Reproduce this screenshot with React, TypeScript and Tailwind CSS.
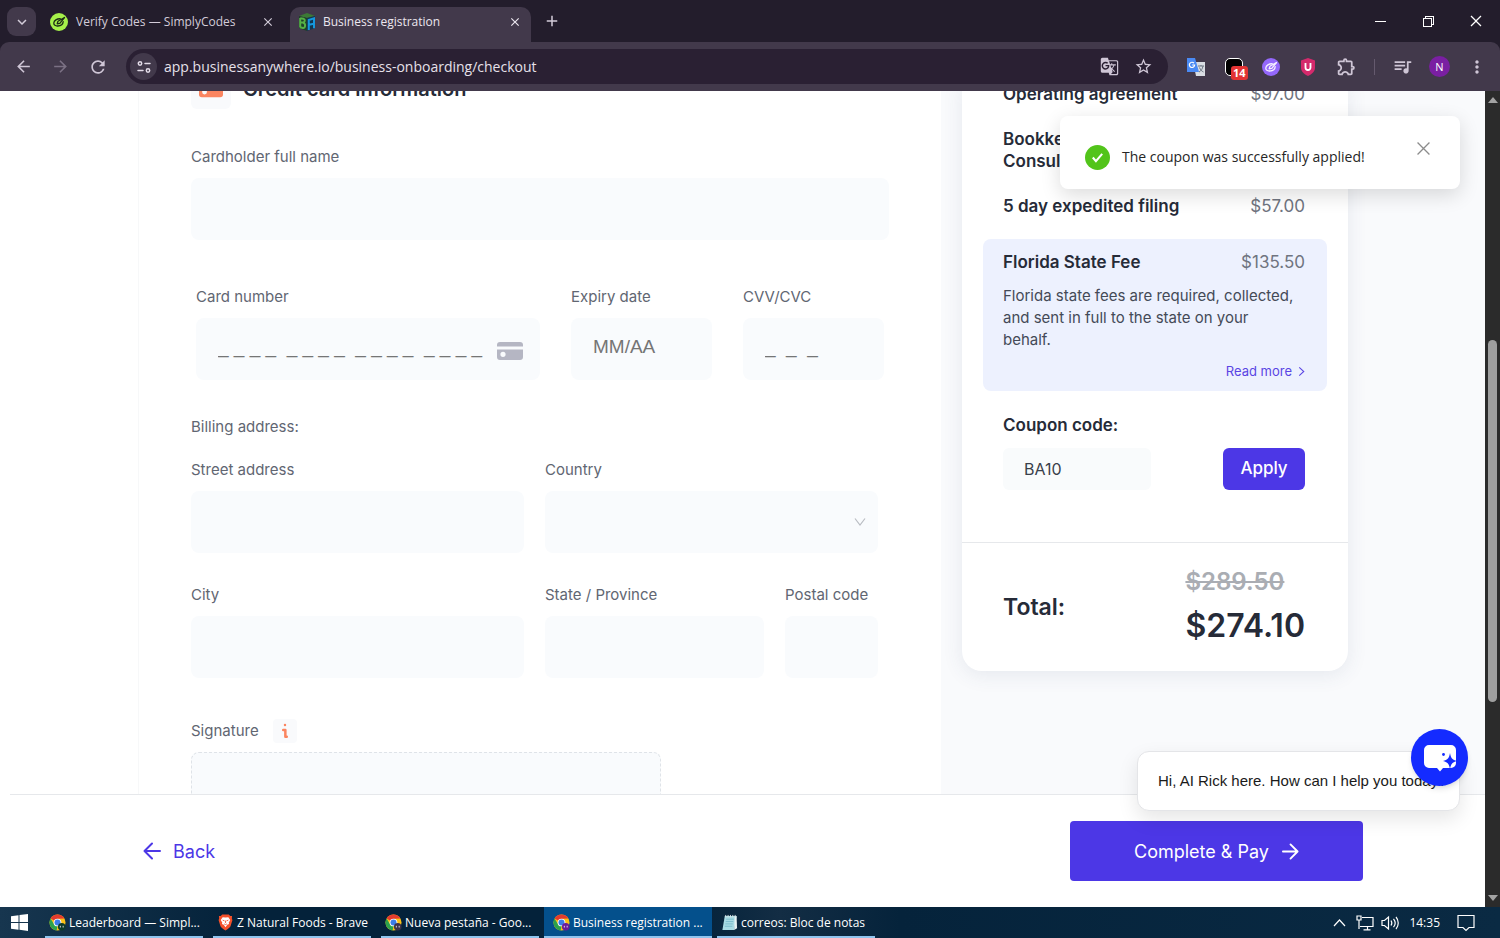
import { useId, type ReactNode } from 'react';
import {
  MdAdd,
  MdArrowBack,
  MdArrowForward,
  MdClose,
  MdGTranslate,
  MdKeyboardArrowDown,
  MdMoreVert,
  MdOutlineExtension,
  MdQueueMusic,
  MdRefresh,
  MdStarBorder,
} from 'react-icons/md';
import { VscChromeClose, VscChromeMinimize, VscChromeRestore } from 'react-icons/vsc';

const fieldClass = 'w-full rounded-lg bg-[#f9fbfd] px-[22px] pb-[4px] text-[#2a2d3a] outline-none';
const labelClass = 'block mb-[10px] text-[15px] leading-[22px] text-[#616672]';

/* ---------- icons ---------- */

function ScribbleIcon({ className, fill, stroke }: { className: string; fill: string; stroke: string }) {
  return (
    <svg viewBox="0 0 18 18" className={className} aria-hidden="true">
      <circle cx="9" cy="9" r="9" fill={fill} />
      <g fill="none" stroke={stroke} strokeWidth="1.300" strokeLinecap="round" strokeLinejoin="round">
        <path d="M14.500 4.500 8 8.200l-.8 2.600 2.600-.4Z" />
        <path d="M10.500 5.800C7 5.500 4 7.500 3.800 10c-.1 2 1.700 3.200 4 3 2.800-.2 5.200-2 5.400-4.400" />
      </g>
    </svg>
  );
}

function CubeLogo() {
  return (
    <svg viewBox="0 0 18 18" className="size-[18px]" aria-hidden="true">
      <path d="M1 3 9 0l8 3-8 2Z" fill="#3c7a35" />
      <path d="M1 3l8 2v13l-8-3Z" fill="#1d3f2a" />
      <path d="M17 3 9 5v13l8-3Z" fill="#123650" />
      <path d="M2.200 5v9.500M2.200 5.200l3.300.6c2 .6 1.500 3.600-.5 3.700H2.200M5 9.700c2.800.4 2.800 5.500-.1 5.200l-2.700-.6" fill="none" stroke="#55b146" strokeWidth="2" />
      <path d="M10.800 17V7l5.200-1.700v10M11 11.800l4.800-1" fill="none" stroke="#1597dd" strokeWidth="2" />
    </svg>
  );
}

function ChromeLogo({ badge }: { badge: string }) {
  return (
    <svg viewBox="0 0 18 18" className="size-[17px] shrink-0" aria-hidden="true">
      <circle cx="9" cy="9" r="8.500" fill="#fbc116" />
      <path d="M9 9 1.640 4.750A8.500 8.500 0 0 1 16.360 4.750L9 5Z" fill="#e33b2e" />
      <path d="M1.640 4.750 5.500 11 9 13l-1 4.450A8.500 8.500 0 0 1 1.640 4.750Z" fill="#2ba24c" />
      <circle cx="9" cy="9" r="4.100" fill="#fff" />
      <circle cx="9" cy="9" r="3.200" fill="#3b7de8" />
      <circle cx="13.500" cy="13.500" r="4" fill={badge} />
      <path d="M12 12.500v1.800M15 12.500v1.800" stroke="#e6dff0" strokeWidth="1" />
    </svg>
  );
}

function BraveLogo() {
  return (
    <svg viewBox="0 0 18 18" className="size-[17px] shrink-0" aria-hidden="true">
      <path d="M5.500.5h7l1.500 1.500 2 .2-.3 2.300.6 2-2 6.500c-.3 1-2.200 2.400-5.300 4.500-3.100-2.100-5-3.500-5.300-4.500l-2-6.500.6-2L2 2.200 4 2Z" fill="#f4502a" />
      <path d="M9 3.800 12 3.400l2 3-1.600 2.800.4 1.300-2 1L9 14l-1.800-2.500-2-1 .4-1.300L4 6.400l2-3Z" fill="#fff" />
      <path d="M6 6.500l2 .8M12 6.500l-2 .8M9 7v2.500M7.500 10.500 9 11.200l1.500-.7" stroke="#f4502a" strokeWidth=".9" fill="none" />
    </svg>
  );
}

function NotepadLogo() {
  return (
    <svg viewBox="0 0 18 18" className="size-[17px] shrink-0" aria-hidden="true">
      <path d="M4 2h12.500L14 17H1.500Z" fill="#a9dbe4" />
      <path d="M14.500 3 16.500 2l.5 13-3 2Z" fill="#e8f2f3" />
      <path d="M5.500 5.500h8M5 8h8M4.500 10.500h8M4 13h8" stroke="#6fb4c4" strokeWidth=".8" />
      <path d="M5 1v2.500M7.500 1v2.500M10 1v2.500M12.500 1v2.500M15 1v2.500" stroke="#dfe7e9" strokeWidth="1" />
    </svg>
  );
}

function CardIcon({ className }: { className: string }) {
  return (
    <svg viewBox="0 0 26 18" className={className} fill="currentColor" aria-hidden="true">
      <path d="M3 0h20a3 3 0 0 1 3 3v1.500H0V3a3 3 0 0 1 3-3Z" />
      <path fillRule="evenodd" d="M0 7.500h26V15a3 3 0 0 1-3 3H3a3 3 0 0 1-3-3Zm6 2.200a2.600 2.600 0 1 0 0 5.200 2.600 2.600 0 0 0 0-5.200Z" />
    </svg>
  );
}

function Arrow({ left, className }: { left?: boolean; className: string }) {
  return (
    <svg viewBox="0 0 18 18" className={className} fill="none" stroke="currentColor" strokeWidth="2" strokeLinecap="round" strokeLinejoin="round" aria-hidden="true">
      <path d={left ? 'M17 9H1.500M9 1.500 1.500 9 9 16.500' : 'M1 9h15.500M9 1.500 16.500 9 9 16.500'} />
    </svg>
  );
}

/* ---------- browser ---------- */

function TabStrip() {
  return (
    <div className="flex h-[42px] shrink-0 items-end bg-[#231d2c] text-[#d3ccd9]">
      <button aria-label="Search tabs" className="mb-[6px] ml-[7px] flex h-[29px] w-[29px] items-center justify-center rounded-[9px] bg-[#42394b]">
        <MdKeyboardArrowDown className="size-[18px]" />
      </button>
      <div className="flex h-[35px] w-[254px] items-center pb-[6px] pl-[14px] pr-[15px]">
        <ScribbleIcon className="size-[18px]" fill="#a5f04a" stroke="#1c2b16" />
        <span className="ml-[8px] flex-1 whitespace-nowrap text-[12px]">Verify Codes — SimplyCodes</span>
        <button aria-label="Close tab">
          <MdClose className="size-[14px]" />
        </button>
      </div>
      <div className="flex h-[35px] w-[241px] items-center rounded-t-[10px] bg-[#42394b] pb-[6px] pl-[8px] pr-[9px] text-[#ece7ef]">
        <CubeLogo />
        <span className="ml-[7px] flex-1 whitespace-nowrap text-[12px]">Business registration</span>
        <button aria-label="Close tab">
          <MdClose className="size-[14px]" />
        </button>
      </div>
      <button aria-label="New tab" className="mb-[12px] ml-[12px]">
        <MdAdd className="size-[18px]" />
      </button>
      <div className="mb-[13px] ml-auto mr-[16px] flex gap-[32px] text-white">
        <button aria-label="Minimize">
          <VscChromeMinimize className="size-[16px]" />
        </button>
        <button aria-label="Restore">
          <VscChromeRestore className="size-[16px]" />
        </button>
        <button aria-label="Close">
          <VscChromeClose className="size-[16px]" />
        </button>
      </div>
    </div>
  );
}

function Toolbar() {
  return (
    <div className="bg-[#231d2c]">
      <div className="flex h-[49px] shrink-0 items-center rounded-t-[9px] bg-[#42394b] text-[#cfc6d6]">
        <button aria-label="Back" className="ml-[14px]">
          <MdArrowBack className="size-[19px]" />
        </button>
        <button aria-label="Forward" className="ml-[18px] text-[#7b7184]">
          <MdArrowForward className="size-[19px]" />
        </button>
        <button aria-label="Reload" className="ml-[18px]">
          <MdRefresh className="size-[20px]" />
        </button>
        <div className="ml-[18px] flex h-[35px] flex-1 items-center rounded-full bg-[#2a2033] pl-[4px] pr-[15px]">
          <button aria-label="View site information" className="flex size-[27px] items-center justify-center rounded-full bg-[#42394b]">
            <svg viewBox="0 0 14 14" className="size-[14px]" fill="none" stroke="#e3dce8" strokeWidth="1.500" strokeLinecap="round">
              <circle cx="3" cy="3.500" r="1.700" />
              <path d="M8 3.500h5M1 10.500h5" />
              <circle cx="11" cy="10.500" r="1.700" />
            </svg>
          </button>
          <input
            aria-label="Address"
            defaultValue="app.businessanywhere.io/business-onboarding/checkout"
            className="ml-[7px] min-w-0 flex-1 bg-transparent text-[14px] text-[#e6e0ea] outline-none"
          />
          <button aria-label="Translate this page">
            <MdGTranslate className="size-[19px]" />
          </button>
          <button aria-label="Bookmark this tab" className="ml-[15px]">
            <MdStarBorder className="size-[19px]" />
          </button>
        </div>
        <button aria-label="Google Translate" className="ml-[19px]">
          <svg viewBox="0 0 18 18" className="size-[18px]">
            <path d="M6 4h12v14H9Z" fill="#d9dde3" />
            <path d="M11 8h6M14 7v1M12 14c2-1 3.500-3 4-6M12.500 9.500c1 2.500 2 3.500 4 4.500" stroke="#6d7783" fill="none" />
            <path d="M0 0h8l4 14H0Z" fill="#4a8af4" />
            <path d="M7 5.200A2.600 2.600 0 1 0 7.600 7H5.200" fill="none" stroke="#fff" strokeWidth="1.200" />
          </svg>
        </button>
        <button aria-label="Coupon extension" className="relative ml-[20px] size-[18px]">
          <span className="block size-[18px] rounded-[5px] border border-white bg-black" />
          <span className="absolute left-[6px] top-[8px] rounded-[3px] bg-[#e33434] px-[2px] text-[11px] font-bold leading-[14px] text-white">14</span>
        </button>
        <button aria-label="SimplyCodes" className="ml-[19px]">
          <ScribbleIcon className="size-[18px]" fill="#9468fb" stroke="#f5efff" />
        </button>
        <button aria-label="Shield extension" className="ml-[20px]">
          <svg viewBox="0 0 16 18" className="h-[18px] w-[16px]">
            <path d="M8 0l7 2.500v7c0 4-3 6.500-7 8.500-4-2-7-4.500-7-8.500v-7Z" fill="#d42a6c" />
            <path d="M5.500 5v4.500a2.500 2.500 0 0 0 5 0V5" fill="none" stroke="#fff" strokeWidth="1.800" />
          </svg>
        </button>
        <button aria-label="Extensions" className="ml-[20px]">
          <MdOutlineExtension className="size-[21px]" />
        </button>
        <span className="ml-[17px] h-[16px] w-px bg-[#655a6e]" />
        <button aria-label="Media controls" className="ml-[17px]">
          <MdQueueMusic className="size-[21px]" />
        </button>
        <button aria-label="Profile" className="ml-[16px] size-[21px] rounded-full bg-[#7a1fa2] text-[11px] leading-[21px] text-white">
          N
        </button>
        <button aria-label="Menu" className="ml-[17px] mr-[13px]">
          <MdMoreVert className="size-[20px]" />
        </button>
      </div>
    </div>
  );
}

function Scrollbar() {
  return (
    <div className="flex w-[15px] shrink-0 flex-col items-center bg-[#2b2b2b] py-[6px]">
      <span className="h-0 w-0 border-x-[5px] border-b-[6px] border-x-transparent border-b-[#a3a3a3]" />
      <span className="mt-[237px] h-[362px] w-[9px] rounded-full bg-[#9f9f9f]" />
      <span className="mt-auto h-0 w-0 border-x-[5px] border-t-[6px] border-x-transparent border-t-[#a3a3a3]" />
    </div>
  );
}

/* ---------- checkout form ---------- */

interface FieldProps {
  label: string;
  placeholder?: string;
  className?: string;
  icon?: ReactNode;
}

function Field({ label, placeholder, className = '', icon }: FieldProps) {
  const id = useId();
  return (
    <div className={className}>
      <label htmlFor={id} className={labelClass}>{label}</label>
      <div className="relative">
        <input id={id} placeholder={placeholder} className={`${fieldClass} block h-[62px] font-['Liberation_Sans',sans-serif] text-[19px] placeholder:text-[#757575]`} />
        {icon}
      </div>
    </div>
  );
}

function CardForm() {
  const countryId = useId();
  return (
    <form className="-mt-[22px] min-w-0 flex-1 bg-white pl-[138px]">
      <div className="h-full border-l border-[#f7f8f9] pl-[52px] pr-[52px]">
        <div className="mb-[37px] flex h-[40px] items-center gap-[12px]">
          <span className="flex size-[40px] items-center justify-center rounded-md bg-[#f9fafc]">
            <CardIcon className="h-[18px] w-[24px] text-[#fb8560]" />
          </span>
          <h2 className="text-[20px] font-semibold leading-[40px] text-[#262b38]">Credit card information</h2>
        </div>
        <Field label="Cardholder full name" />
        <div className="mt-[46px] flex gap-[31px] px-[5px]">
          <Field
            className="min-w-0 flex-1"
            label="Card number"
            placeholder="_ _ _ _  _ _ _ _  _ _ _ _  _ _ _ _"
            icon={<CardIcon className="absolute right-[17px] top-[24px] h-[18px] w-[26px] text-[#b5b6c3]" />}
          />
          <Field className="w-[141px]" label="Expiry date" placeholder="MM/AA" />
          <Field className="w-[141px]" label="CVV/CVC" placeholder="_  _  _" />
        </div>
        <p className="mb-[21px] mt-[36px] text-[15px] leading-[22px] text-[#616672]">Billing address:</p>
        <div className="grid grid-cols-2 gap-x-[21px] gap-y-[31px] pr-[11px]">
          <Field label="Street address" />
          <div>
            <label htmlFor={countryId} className={labelClass}>Country</label>
            <div className="relative">
              <select id={countryId} className={`${fieldClass} block h-[62px] appearance-none`} />
              <svg viewBox="0 0 12 8" className="pointer-events-none absolute right-[12px] top-[27px] h-[8px] w-[12px]" fill="none" stroke="#b9bcc2" strokeWidth="1.200">
                <path d="M1 .5 6 7l5-6.500" />
              </svg>
            </div>
          </div>
          <Field label="City" />
          <div className="flex gap-[21px]">
            <Field className="min-w-0 flex-1" label="State / Province" />
            <Field className="w-[93px] whitespace-nowrap" label="Postal code" />
          </div>
        </div>
        <div className="mt-[42px] flex h-[22px] items-center gap-[14px] text-[15px] text-[#616672]">
          <span>Signature</span>
          <button type="button" aria-label="About the signature" className="flex size-[24px] items-center justify-center rounded bg-[#f9fafc]">
            <svg viewBox="0 0 8 18" className="h-[16px] w-[8px]" fill="none" stroke="#fb8560" strokeWidth="2.800" strokeLinecap="round" strokeLinejoin="round">
              <path d="M4 2.200v.1M2 8h2.400v7.500H6" />
            </svg>
          </button>
        </div>
        <div className="mt-[10px] h-[160px] w-[470px] rounded-lg border border-dashed border-[#dfe3e8] bg-[#f9fbfd]" />
      </div>
    </form>
  );
}

/* ---------- order summary ---------- */

function SummaryRow({ name, price }: { name: ReactNode; price: string }) {
  return (
    <div className="flex justify-between leading-[22px]">
      <span className="text-[17px] font-semibold text-[#262b38]">{name}</span>
      <span className="text-[17px] text-[#6f7480]">{price}</span>
    </div>
  );
}

function OrderSummary() {
  const couponId = useId();
  return (
    <aside className="w-[544px] shrink-0 bg-[#f9fafc] pl-[21px]">
      <div className="-mt-[8px] w-[386px] rounded-b-[20px] bg-white shadow-[0_4px_20px_rgba(60,80,120,0.1)]">
        <div className="px-[21px]">
          <div className="flex flex-col gap-[23px] pl-[20px] pr-[22px]">
            <SummaryRow name="Operating agreement" price="$97.00" />
            <SummaryRow name={<>Bookkeeping<br />Consultation</>} price="$0.00" />
            <SummaryRow name="5 day expedited filing" price="$57.00" />
          </div>
          <div className="mt-[22px] rounded-lg bg-[#edf1fe] pb-[9px] pl-[20px] pr-[22px] pt-[12px]">
            <SummaryRow name="Florida State Fee" price="$135.50" />
            <p className="mt-[12px] pr-[8px] text-[15px] leading-[22px] text-[#444a57]">
              Florida state fees are required, collected, and sent in full to the state on your behalf.
            </p>
            <a href="#fees" className="mt-[9px] flex items-center justify-end gap-[6px] text-[13px] leading-[22px] text-[#5a45e4]">
              Read more
              <svg viewBox="0 0 6 10" className="h-[9px] w-[7px]" fill="none" stroke="currentColor" strokeWidth="1.200">
                <path d="m.5.5 5 4.500-5 4.500" />
              </svg>
            </a>
          </div>
          <div className="pb-[52px] pl-[20px] pr-[22px] pt-[23px]">
            <label htmlFor={couponId} className="block text-[17px] font-semibold leading-[22px] text-[#262b38]">Coupon code:</label>
            <div className="mt-[12px] flex justify-between">
              <input id={couponId} defaultValue="BA10" className="h-[42px] w-[148px] rounded-md bg-[#f9fbfc] px-[21px] text-[16px] text-[#3a3f4b] outline-none" />
              <button className="h-[42px] w-[82px] rounded-md bg-[#4c37e6] text-[17px] font-medium text-white">Apply</button>
            </div>
          </div>
        </div>
        <div className="flex items-center justify-between border-t border-[#e6e8eb] pb-[23px] pl-[41px] pr-[43px] pt-[23px]">
          <span className="text-[23px] font-semibold text-[#262b38]">Total:</span>
          <div className="flex flex-col gap-[6px]">
            <s className="text-[24px] font-semibold leading-[32px] text-[#aaadb3]">$289.50</s>
            <span className="text-[32px] font-semibold leading-[44px] text-[#262b38]">$274.10</span>
          </div>
        </div>
      </div>
    </aside>
  );
}

function CouponToast() {
  return (
    <div role="status" className="absolute right-[25px] top-[25px] flex h-[73px] w-[400px] items-start rounded-lg bg-white pl-[25px] pr-[30px] shadow-[0_6px_20px_rgba(0,0,0,0.14)]">
      <svg viewBox="0 0 24 24" className="mt-[29px] size-[25px]">
        <circle cx="12" cy="12" r="12" fill="#52c41a" />
        <path d="m7.500 12 3 3.500L16.500 8.500" fill="none" stroke="#fff" strokeWidth="2" />
      </svg>
      <p className="ml-[12px] mt-[30px] flex-1 font-['Open_Sans',sans-serif] text-[14px] leading-[22px] text-[#262626]">The coupon was successfully applied!</p>
      <button aria-label="Close" className="mt-[26px]">
        <svg viewBox="0 0 12 12" className="size-[13px]" stroke="#8c8c8c" strokeWidth="1.200">
          <path d="m.5.5 11 11M11.500.5l-11 11" />
        </svg>
      </button>
    </div>
  );
}

function ChatWidget() {
  return (
    <div className="absolute bottom-[96px] right-[25px] font-['Liberation_Sans',sans-serif]">
      <p className="h-[60px] w-[323px] whitespace-nowrap rounded-xl border border-[#e4e5e8] bg-white px-[20px] text-[15px] leading-[58px] text-[#1a1a1a] shadow-[0_8px_20px_rgba(0,0,0,0.1)]">
        Hi, AI Rick here. How can I help you today?
      </p>
      <button aria-label="Open chat" className="absolute -right-[8px] -top-[22px] flex size-[57px] items-center justify-center rounded-full bg-[#142bff] shadow-md">
        <svg viewBox="0 0 34 28" className="h-[28px] w-[34px]">
          <path d="M6 1h22a5 5 0 0 1 5 5v13a5 5 0 0 1-5 5h-8l-3 3.500L14 24H6a5 5 0 0 1-5-5V6a5 5 0 0 1 5-5Z" fill="#fff" />
          <path d="M27 9c.9 5 2.200 6.700 7 8-4.800 1.300-6.100 3-7 8-.9-5-2.200-6.700-7-8 4.800-1.300 6.100-3 7-8Z" fill="#142bff" />
          <circle cx="20.500" cy="10.500" r="1.400" fill="#142bff" />
        </svg>
      </button>
    </div>
  );
}

function CheckoutFooter() {
  return (
    <footer className="ml-[10px] flex h-[113px] shrink-0 items-center justify-between border-t border-[#e6e8eb] bg-white pl-[133px] pr-[122px]">
      <button className="flex items-center gap-[12px] text-[18px] text-[#4c37e6]">
        <Arrow left className="size-[18px]" />
        Back
      </button>
      <button className="flex h-[60px] w-[293px] items-center justify-center gap-[13px] rounded-sm bg-[#4c37e6] text-[18px] text-white">
        Complete &amp; Pay
        <Arrow className="size-[17px]" />
      </button>
    </footer>
  );
}

/* ---------- taskbar ---------- */

const windows = [
  { title: 'Leaderboard — Simpl...', icon: <ChromeLogo badge="#0d3b2a" /> },
  { title: 'Z Natural Foods - Brave', icon: <BraveLogo /> },
  { title: 'Nueva pestaña - Goo...', icon: <ChromeLogo badge="#3c3148" /> },
  { title: 'Business registration ...', icon: <ChromeLogo badge="#6a1b9a" />, active: true },
  { title: 'correos: Bloc de notas', icon: <NotepadLogo /> },
];

function Taskbar() {
  return (
    <div className="flex h-[31px] shrink-0 bg-[linear-gradient(90deg,#17364f,#04223a_16%,#04223a_46%,#132d44_52%,#05233b_60%,#0a2a43)] text-white">
      <button aria-label="Start" className="flex w-[40px] items-center pl-[11px]">
        <svg viewBox="0 0 17 17" className="size-[17px]" fill="#fff">
          <path d="M0 2.300 7.500 1.300V8H0ZM8.500 1.100 17 0v8H8.500ZM0 9h7.500v6.700L0 14.700ZM8.500 9H17v8l-8.500-1.200Z" />
        </svg>
      </button>
      {windows.map(w => (
        <button
          key={w.title}
          className={`flex items-center gap-[3px] border-b-2 border-[#8fc4ee] pt-[2px] whitespace-nowrap text-[12px] ${
            w.active ? 'w-[168px] bg-[#04508c] pl-[9px]' : 'mx-[5px] w-[158px] pl-[4px]'
          }`}
        >
          {w.icon}
          {w.title}
        </button>
      ))}
      <div className="ml-auto flex items-center pr-[25px]">
        <svg viewBox="0 0 12 8" className="h-[8px] w-[13px]" fill="none" stroke="#fff" strokeWidth="1.200">
          <path d="M.5 7 6 1l5.500 6" />
        </svg>
        <svg viewBox="0 0 18 16" className="ml-[10px] h-[16px] w-[18px]" fill="none" stroke="#fff" strokeWidth="1.200">
          <path d="M6 2.500h11v9H6M4 11.500h4M11.500 11.500v3M7.500 14.800h7M1 1h4v4H1ZM3 5v9" />
        </svg>
        <svg viewBox="0 0 18 16" className="ml-[7px] h-[16px] w-[18px]" fill="none" stroke="#fff" strokeWidth="1.200">
          <path d="M1 5.500h2.500l4-3.500v12l-4-3.500H1ZM10 5.500c1 1.500 1 3.500 0 5M12.500 3.800c2 2.500 2 6 0 8.400M15 2c3 3.500 3 8.500 0 12" />
        </svg>
        <time className="ml-[10px] text-[12px]">14:35</time>
        <svg viewBox="0 0 18 18" className="ml-[17px] size-[18px]" fill="none" stroke="#fff" strokeWidth="1.200">
          <path d="M1 1.500h16v12h-5l-3 3-3-3H1Z" />
        </svg>
      </div>
    </div>
  );
}

export default function App() {
  return (
    <div className="flex h-screen flex-col overflow-hidden bg-white font-['Open_Sans',sans-serif]">
      <TabStrip />
      <Toolbar />
      <div className="flex min-h-0 flex-1">
        <div className="relative flex min-w-0 flex-1 flex-col font-[Inter,sans-serif]">
          <main className="flex min-h-0 flex-1 overflow-hidden">
            <CardForm />
            <OrderSummary />
          </main>
          <CheckoutFooter />
          <CouponToast />
          <ChatWidget />
        </div>
        <Scrollbar />
      </div>
      <Taskbar />
    </div>
  );
}
